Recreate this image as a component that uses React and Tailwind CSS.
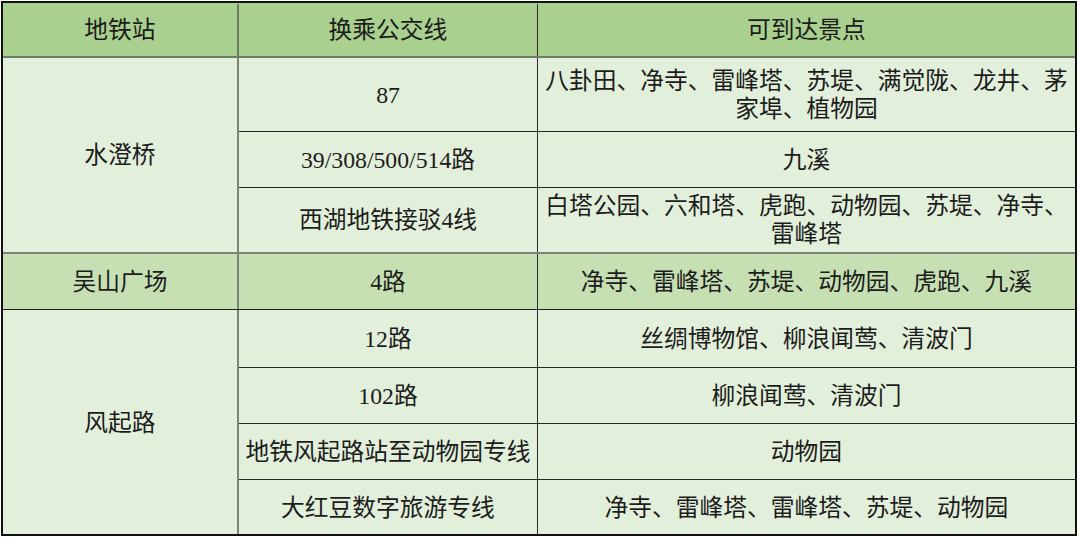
import React from "react";

const FONT = { fontFamily: '"Liberation Serif", "Noto Sans CJK SC", serif' };

const groups = [
  {
    station: "水澄桥",
    bg: "bg-[#e2efda]",
    rows: [
      { line: "87", sights: ["八卦田、净寺、雷峰塔、苏堤、满觉陇、龙井、茅", "家埠、植物园"], h: "h-[73px]" },
      { line: "39/308/500/514路", sights: ["九溪"], h: "h-[55px]" },
      { line: "西湖地铁接驳4线", sights: ["白塔公园、六和塔、虎跑、动物园、苏堤、净寺、", "雷峰塔"], h: "h-[64px]", lastBorder: "border-b-2 border-b-[#7b8575]" },
    ],
  },
  {
    station: "吴山广场",
    bg: "bg-[#c6e0b4]",
    rows: [
      { line: "4路", sights: ["净寺、雷峰塔、苏堤、动物园、虎跑、九溪"], h: "h-[55px]", lastBorder: "border-b border-b-[#1f1f1f]" },
    ],
  },
  {
    station: "风起路",
    bg: "bg-[#e2efda]",
    rows: [
      { line: "12路", sights: ["丝绸博物馆、柳浪闻莺、清波门"], h: "h-[57px]" },
      { line: "102路", sights: ["柳浪闻莺、清波门"], h: "h-[55px]" },
      { line: "地铁风起路站至动物园专线", sights: ["动物园"], h: "h-[55px]" },
      { line: "大红豆数字旅游专线", sights: ["净寺、雷峰塔、雷峰塔、苏堤、动物园"], h: "h-[55px]" },
    ],
  },
];

const Cell = ({ children, className }) => (
  <div className={`flex flex-col items-center justify-center text-center leading-[28px] ${className}`}>
    {children}
  </div>
);

const Group = ({ group, isLast }) => {
  const lastRow = group.rows[group.rows.length - 1];
  const groupBottom = isLast ? "" : lastRow.lastBorder;
  return (
    <div className={`flex shrink-0 ${group.bg} ${groupBottom}`}>
      <Cell className="w-[236px] shrink-0 border-r-2 border-r-[#7b8575]">{group.station}</Cell>
      <div className="flex flex-1 flex-col">
        {group.rows.map((row, i) => {
          const inner = i < group.rows.length - 1 ? "border-b border-b-[#262626]" : "";
          return (
            <div key={row.line} className={`box-content flex ${row.h} ${inner}`}>
              <Cell className="w-[299px] shrink-0 border-r border-r-[#2a2a2a]">{row.line}</Cell>
              <Cell className="flex-1 px-[4px]">
                {row.sights.map((s) => (
                  <span key={s} className="whitespace-nowrap">{s}</span>
                ))}
              </Cell>
            </div>
          );
        })}
      </div>
    </div>
  );
};

export default function App() {
  return (
    <div className="h-[540px] w-[1080px] bg-white pl-px pt-px">
      <div
        className="flex h-[535px] w-[1076px] flex-col overflow-hidden border-2 border-[#111] text-[23.75px] text-[#1c1c1c]"
        style={FONT}
      >
        <div className="box-content flex h-[52px] shrink-0 border-b-2 border-b-[#6e7c66] bg-[#a9d08e] pt-[1px]">
          <Cell className="w-[236px] shrink-0 border-r-2 border-r-[#6e7c66]">地铁站</Cell>
          <Cell className="w-[299px] shrink-0 border-r border-r-[#2a2a2a]">换乘公交线</Cell>
          <Cell className="flex-1">可到达景点</Cell>
        </div>
        {groups.map((g, i) => (
          <Group key={g.station} group={g} isLast={i === groups.length - 1} />
        ))}
      </div>
    </div>
  );
}
